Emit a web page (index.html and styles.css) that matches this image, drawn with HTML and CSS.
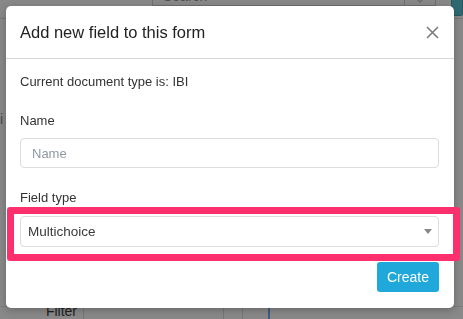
FILE: index.html
```html
<!DOCTYPE html>
<html lang="en">
<head>
  <meta charset="UTF-8">
  <title>Add new field</title>
  <link rel="stylesheet" href="styles.css">
</head>
<body>

<!-- page behind the dialog -->
<div class="page">
  <div class="topbar">
    <div class="search">Search</div>
    <div class="search-btn">
      <svg width="12" height="8" viewBox="0 0 12 8"><path d="M1 1l5 5 5-5" fill="none" stroke="#6a6a6a" stroke-width="1.4"/></svg>
    </div>
    <div class="teal"></div>
  </div>
  <div class="rule"></div>
  <div class="side-text">sci</div>
  <div class="filter-row">
    <div class="filter-label">Filter</div>
    <div class="cell wide"></div>
    <div class="cell small"></div>
    <div class="cell tiny"></div>
    <div class="cell rest"></div>
  </div>
</div>

<!-- dialog -->
<div class="backdrop">
  <div class="modal">
    <div class="modal-header">
      <h4 class="modal-title">Add new field to this form</h4>
      <button class="close" aria-label="Close">
        <svg width="13" height="13" viewBox="0 0 13 13"><path d="M1 1l11 11M12 1L1 12" stroke="#777" stroke-width="1.5" fill="none"/></svg>
      </button>
    </div>
    <div class="modal-body">
      <p class="doc-type">Current document type is: IBI</p>
      <label class="field-label">Name</label>
      <input class="form-control" type="text" placeholder="Name">
      <label class="field-label type-label">Field type</label>
      <div class="highlight">
        <div class="form-control select">
          <span>Multichoice</span>
          <span class="caret"></span>
        </div>
      </div>
    </div>
    <div class="modal-footer">
      <button class="btn-create">Create</button>
    </div>
  </div>
</div>

</body>
</html>
```
FILE: styles.css
```css
* { box-sizing: border-box; margin: 0; padding: 0; }
body {
  font-family: "Liberation Sans", Arial, sans-serif;
  background: #898989;
  overflow: hidden;
}

/* dimmed page */
.page {
  height: 319px;
  display: flex;
  flex-direction: column;
  color: #222;
}

.topbar {
  display: flex;
  height: 17px;
  margin-top: -11px;
}

.search {
  margin-left: 152px;
  width: 256px;
  border: 1px solid #6f6f6f;
  border-top: none;
  font-size: 14px;
  color: #505050;
  padding: 0 0 0 10px;
  line-height: 15px;
  height: 17px;
}

.search-btn {
  width: 32px;
  height: 17px;
  border: 1px solid #6f6f6f;
  border-left: none;
  border-top: none;
  display: flex;
  justify-content: center;
  align-items: flex-end;
  padding-bottom: 1px;
}

.teal {
  margin-left: 15px;
  width: 12px;
  height: 27px;
  background: #2f6a72;
  border-radius: 2px;
  border: 1px solid #245a60;
}

.rule {
  margin-top: 12px;
  height: 1px;
  background: #7a7a7a;
}

.side-text {
  margin-top: 92px;
  margin-left: -14px;
  font-size: 14px;
  color: #4a4a4a;
}

.filter-row {
  margin-top: auto;
  display: flex;
  height: 13px;
  border-top: 1px solid #7c7c7c;
}

.filter-label {
  width: 83px;
  text-align: right;
  padding-right: 6px;
  font-size: 14px;
  line-height: 16px;
  margin-top: -4px;
}

.cell { border-left: 1px solid #777; }
.cell.wide { width: 140px; }
.cell.small { width: 19px; }
.cell.tiny { width: 28px; border-right: 2px solid #3d5f86; }
.cell.rest { flex: 1; border-left: none; }

/* dialog */
.backdrop {
  position: fixed;
  top: 0; left: 0;
  width: 100vw; height: 100vh;
}

.modal {
  position: absolute;
  top: 6px;
  left: 6px;
  width: 448px;
  height: 302px;
  background: #fff;
  border-radius: 5px;
  box-shadow: 0 2px 8px rgba(0,0,0,0.25);
  color: #333;
}

.modal-header {
  display: flex;
  align-items: center;
  justify-content: space-between;
  padding: 14px 15px 14px 14px;
  border-bottom: 1px solid #d6d6d6;
}

.modal-title {
  font-size: 16.5px;
  font-weight: normal;
  line-height: 24px;
  color: #222;
}

.close {
  background: none;
  border: none;
  width: 13px;
  height: 13px;
  display: flex;
  cursor: pointer;
}

.modal-body {
  display: flex;
  flex-direction: column;
  padding: 13px 15px 0 14px;
}

.doc-type {
  font-size: 13px;
  line-height: 20px;
  color: #333;
}

.field-label {
  font-size: 13px;
  line-height: 20px;
  margin-top: 19px;
  color: #333;
}

.type-label { margin-top: 20px; }

.form-control {
  margin-top: 7px;
  height: 30px;
  border: 1px solid #dcdcdc;
  border-radius: 4px;
  padding: 0 11px;
  font-family: inherit;
  font-size: 13px;
  color: #333;
  outline: none;
}

.form-control::placeholder { color: #8f98a3; }

.highlight {
  margin: -1px -21px 0 -13px;
  border: 7px solid #fe2f6d;
  border-radius: 3px;
  padding: 2px 14px 7px 6px;
}

.select {
  margin-top: 0;
  height: 31px;
  display: flex;
  align-items: center;
  justify-content: space-between;
  padding: 0 6px 0 7px;
  color: #3a3a3a;
  font-size: 13.5px;
}

.caret {
  width: 0;
  height: 0;
  border-left: 4px solid transparent;
  border-right: 4px solid transparent;
  border-top: 5px solid #888;
}

.modal-footer {
  display: flex;
  justify-content: flex-end;
  padding: 1px 15px 14px 14px;
}

.btn-create {
  width: 62px;
  height: 30px;
  background: #1fa8d9;
  border: none;
  border-radius: 3px;
  color: #fff;
  font-family: inherit;
  font-size: 14px;
  cursor: pointer;
}
```
